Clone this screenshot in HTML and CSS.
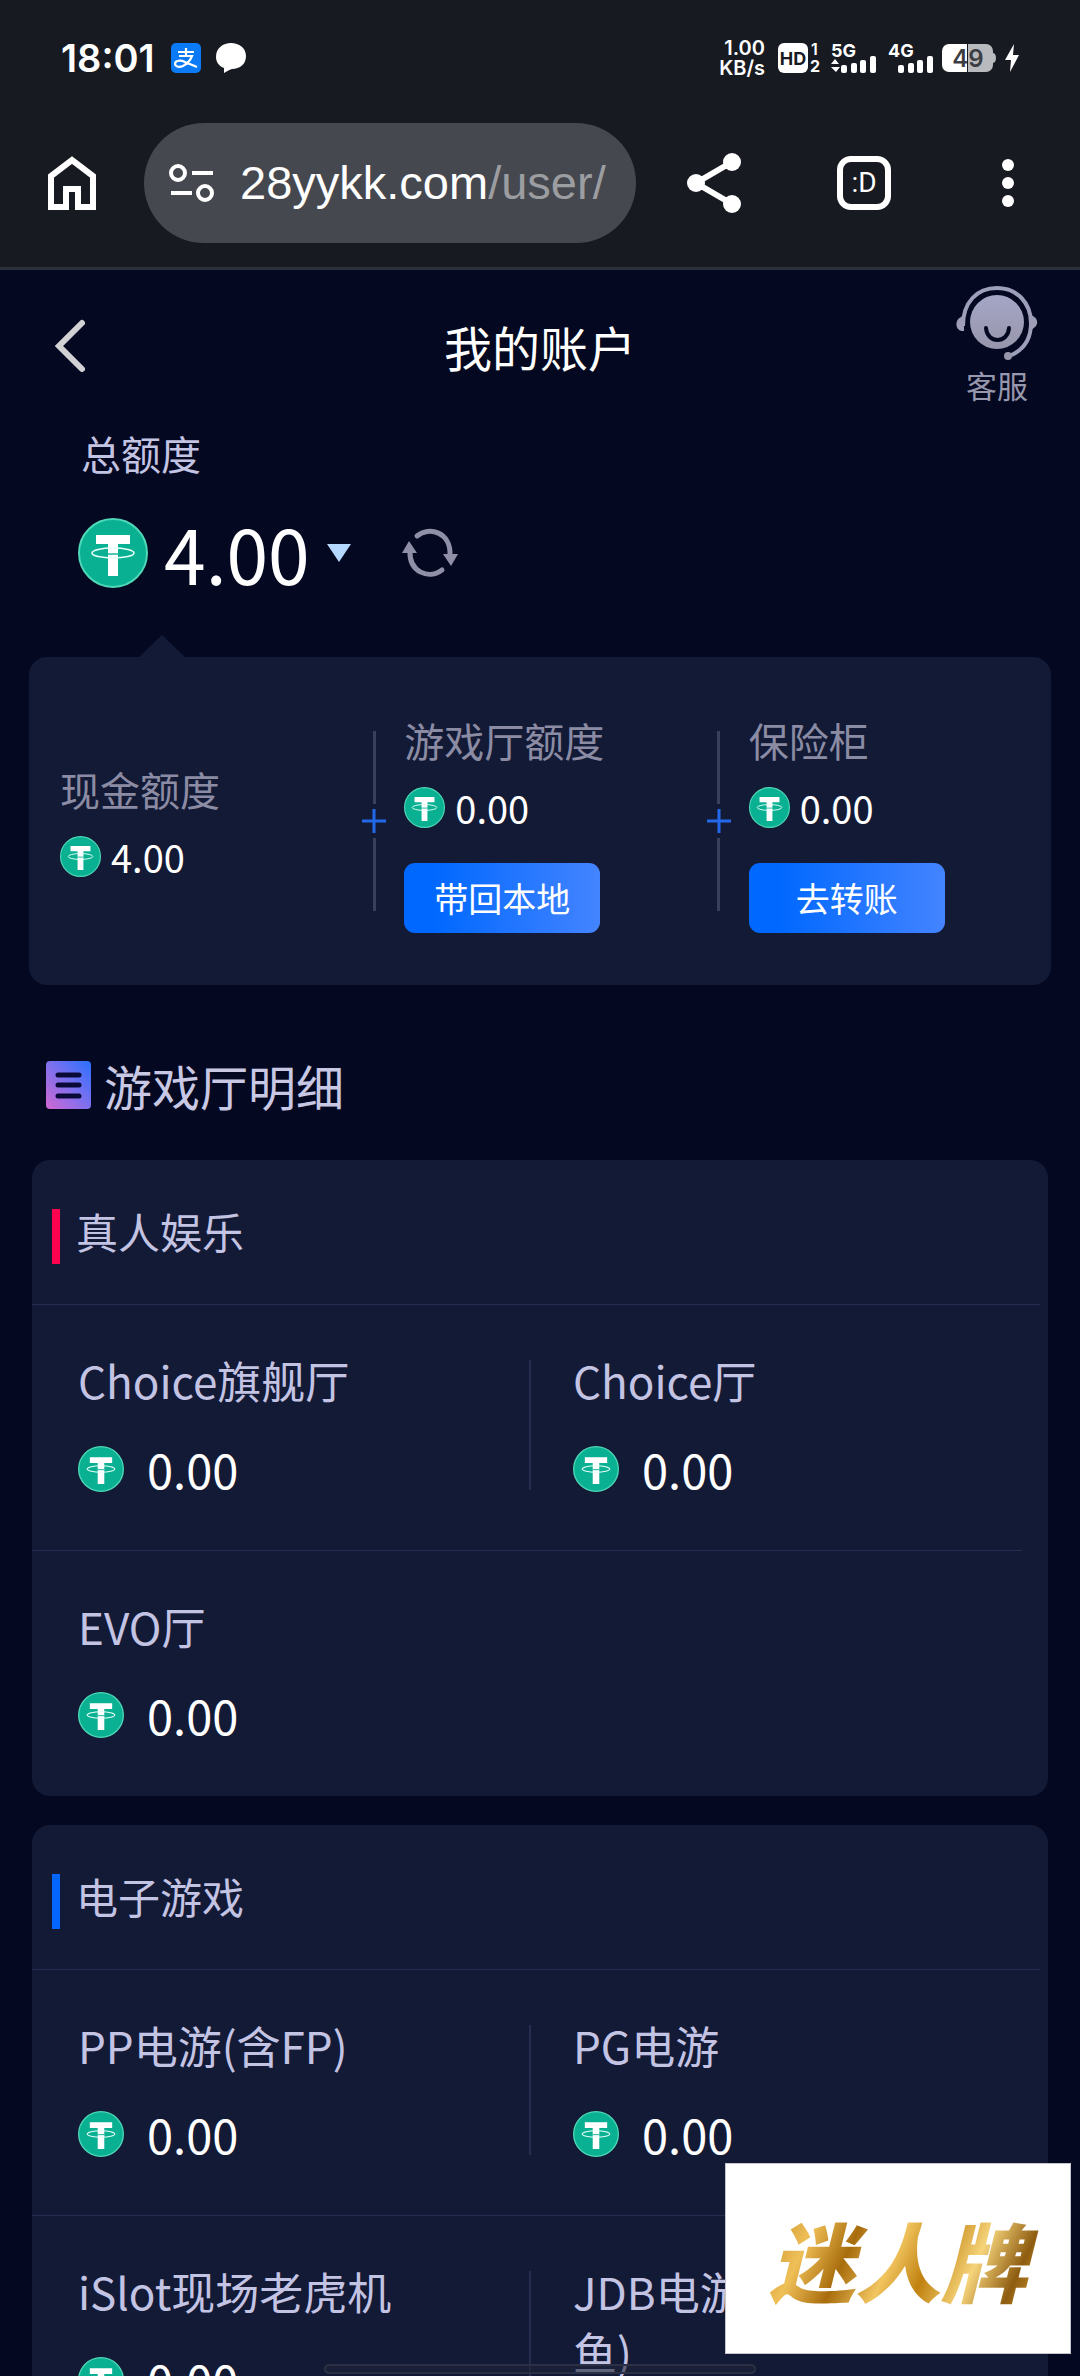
FILE: index.html
```html
<!DOCTYPE html>
<html lang="zh-CN">
<head>
<meta charset="utf-8">
<meta name="viewport" content="width=device-width">
<title>我的账户</title>
<link rel="stylesheet" href="styles.css">
</head>
<body>
<svg class="defs" aria-hidden="true">
  <symbol id="coin" viewBox="0 0 70 70">
    <circle cx="35" cy="35" r="34" fill="#0ab092" stroke="#4fd8b8" stroke-width="2"/>
    <path d="M18 17h34v9H40v32h-10V26H18z" fill="#fff"/>
    <ellipse cx="35" cy="35" rx="21" ry="5" fill="none" stroke="#e6fff8" stroke-width="1.6"/>
    <path d="M30 36h10" stroke="#0ab092" stroke-width="1.4"/>
  </symbol>
</svg>
<div class="phone">
  <div class="status">
    <span class="clock">18:01</span>
    <svg class="alipay" width="30" height="30" viewBox="0 0 30 30"><rect width="30" height="30" rx="5" fill="#0a7bf5"/><path d="M7 9h16M15 5v8M8 13h13c-2 5-5 8-9 10-5 2-8 0-8-2 0-4 6-4 10-2l12 5" fill="none" stroke="#fff" stroke-width="2.2"/></svg>
    <svg class="chat" width="30" height="30" viewBox="0 0 30 30"><path d="M15 0c8 0 15 5 15 13s-6 13-14 13c-3 1-5 2-8 4v-5C3 23 0 19 0 14 0 5 7 0 15 0z" fill="#fff"/></svg>
    <span class="speed"><span>1.00</span><span>KB/s</span></span>
    <svg class="hd" width="42" height="30" viewBox="0 0 42 30"><rect width="30" height="30" rx="6" fill="#fff"/><text x="15" y="22" text-anchor="middle" font-size="18" font-weight="700" fill="#181a22">HD</text><text x="33" y="12" font-size="16" font-weight="600" fill="#fff">1</text><text x="32" y="29" font-size="16" font-weight="700" fill="#fff">2</text></svg>
    <svg class="sig" width="46" height="30" viewBox="0 0 46 30" fill="#fff"><text x="0" y="14" font-size="18" font-weight="700">5G</text><path d="M0 21l4-5 4 5zM0 24h9l-4 5z"/><rect x="10" y="22" width="6" height="8" rx="2"/><rect x="20" y="20" width="6" height="10" rx="2"/><rect x="29" y="17" width="6" height="13" rx="2"/><rect x="39" y="13" width="6" height="17" rx="2"/></svg>
    <svg class="sig" width="46" height="30" viewBox="0 0 46 30" fill="#fff"><text x="0" y="14" font-size="18" font-weight="700">4G</text><rect x="10" y="22" width="6" height="8" rx="2"/><rect x="20" y="20" width="6" height="10" rx="2"/><rect x="29" y="17" width="6" height="13" rx="2"/><rect x="39" y="13" width="6" height="17" rx="2"/></svg>
    <svg class="battery" width="54" height="28" viewBox="0 0 54 28"><path d="M26 0h18a7 7 0 0 1 7 7v14a7 7 0 0 1-7 7H26zM51 9c4 0 4 10 0 10z" fill="#b9babd"/><path d="M7 0h18v28H7a7 7 0 0 1-7-7V7a7 7 0 0 1 7-7z" fill="#fff"/><text x="26" y="23" text-anchor="middle" font-size="24" font-weight="600" fill="#3c3e44">49</text></svg>
    <svg class="bolt" width="14" height="28" viewBox="0 0 14 28"><path d="M9 0L0 16h6L5 28l9-17H8z" fill="#fff"/></svg>
  </div>
  <div class="toolbar">
    <button class="home" aria-label="主页"><svg width="48" height="54" viewBox="0 0 48 54"><path d="M3 51V20L24 4l21 16v31H30V33H18v18z" fill="none" stroke="#fff" stroke-width="6"/></svg></button>
    <button class="url">
      <svg width="46" height="38" viewBox="0 0 46 38" fill="none" stroke="#fff" stroke-width="4"><circle cx="9" cy="9" r="7"/><path d="M23 9h21M2 29h21"/><circle cx="36" cy="29" r="7"/></svg>
      <span>28yykk.com<span class="path">/user/</span></span>
    </button>
    <button class="share" aria-label="分享"><svg width="54" height="60" viewBox="0 0 54 60"><path d="M45 9L9 30l36 21" fill="none" stroke="#fff" stroke-width="6"/><g fill="#fff"><circle cx="45" cy="9" r="9"/><circle cx="9" cy="30" r="9"/><circle cx="45" cy="51" r="9"/></g></svg></button>
    <button class="tabs">:D</button>
    <button class="more" aria-label="更多"><svg width="12" height="48" viewBox="0 0 12 48" fill="#fff"><circle cx="6" cy="6" r="6"/><circle cx="6" cy="24" r="6"/><circle cx="6" cy="42" r="6"/></svg></button>
  </div>

  <main class="page">
    <header class="head">
      <a class="back" href="#" aria-label="返回"><svg width="30" height="52" viewBox="0 0 30 52"><path d="M27 3L4 26l23 23" fill="none" stroke="#d2d2d4" stroke-width="6" stroke-linecap="round"/></svg></a>
      <h1>我的账户</h1>
      <a class="service" href="#">
        <svg width="80" height="74" viewBox="0 0 80 74">
          <defs><linearGradient id="face" x1="0" y1="0" x2="0" y2="1"><stop offset="0" stop-color="#a5a6c6"/><stop offset="1" stop-color="#9796ab"/></linearGradient></defs>
          <path d="M6 40C6 16 20 2 40 2s34 15 34 35c0 18-9 28-22 33" fill="none" stroke="#9e9fbb" stroke-width="4"/>
          <path d="M7 29v16c-9 1-10-11-3-14zM73 29v16l5-4c4-4 2-9-2-11z" fill="#9e9eb6"/>
          <circle cx="51" cy="70" r="4" fill="#9796ab"/>
          <circle cx="40" cy="36" r="27" fill="url(#face)"/>
          <path d="M29 42c1 16 22 16 23 0" fill="none" stroke="#040820" stroke-width="4" stroke-linecap="round"/>
        </svg>
        <span>客服</span>
      </a>
    </header>

    <section class="total">
      <p>总额度</p>
      <div class="sum">
        <svg class="coin-l"><use href="#coin"/></svg>
        <span class="big">4.00</span>
        <svg class="tri" width="24" height="18" viewBox="0 0 24 18"><path d="M0 0h24L12 18z" fill="#b4d8ff"/></svg>
        <button class="refresh" aria-label="刷新"><svg width="56" height="48" viewBox="0 0 56 48"><g fill="none" stroke="#8f8fa8" stroke-width="5" stroke-linecap="round"><path d="M15 7C27-3 49 3 48 26"/><path d="M40 41C27 51 7 43 8 22"/></g><path d="M41 25h15l-7 12zM0 24h15L7 12z" fill="#8f8fa8"/></svg></button>
      </div>
    </section>

    <section class="split">
      <div class="part cash">
        <p>现金额度</p>
        <div class="amt"><svg class="coin-s"><use href="#coin"/></svg>4.00</div>
      </div>
      <div class="plus"><i></i><svg width="24" height="24" viewBox="0 0 24 24"><path d="M12 0v24M0 12h24" stroke="#2468ea" stroke-width="3"/></svg><i></i></div>
      <div class="part">
        <p>游戏厅额度</p>
        <div class="amt"><svg class="coin-s"><use href="#coin"/></svg>0.00</div>
        <button class="cta">带回本地</button>
      </div>
      <div class="plus"><i></i><svg width="24" height="24" viewBox="0 0 24 24"><path d="M12 0v24M0 12h24" stroke="#2468ea" stroke-width="3"/></svg><i></i></div>
      <div class="part">
        <p>保险柜</p>
        <div class="amt"><svg class="coin-s"><use href="#coin"/></svg>0.00</div>
        <button class="cta">去转账</button>
      </div>
    </section>

    <h2 class="title">
      <svg width="45" height="48" viewBox="0 0 45 48"><defs><linearGradient id="doc" x1="0" y1="1" x2="1" y2="0"><stop offset="0" stop-color="#d268d2"/><stop offset=".5" stop-color="#7e70ee"/><stop offset="1" stop-color="#2a70ff"/></linearGradient></defs><rect width="45" height="48" rx="4" fill="url(#doc)"/><path d="M12 14h21M12 24h21M12 35h21" stroke="#0a0a38" stroke-width="5" stroke-linecap="round"/></svg>
      游戏厅明细
    </h2>

    <section class="card">
      <h3><i class="mark red"></i>真人娱乐</h3>
      <ul>
        <li><p>Choice旗舰厅</p><div class="val"><svg class="coin-m"><use href="#coin"/></svg>0.00</div></li>
        <li><p>Choice厅</p><div class="val"><svg class="coin-m"><use href="#coin"/></svg>0.00</div></li>
        <li><p>EVO厅</p><div class="val"><svg class="coin-m"><use href="#coin"/></svg>0.00</div></li>
      </ul>
    </section>

    <section class="card">
      <h3><i class="mark blue"></i>电子游戏</h3>
      <ul>
        <li><p>PP电游(含FP)</p><div class="val"><svg class="coin-m"><use href="#coin"/></svg>0.00</div></li>
        <li><p>PG电游</p><div class="val"><svg class="coin-m"><use href="#coin"/></svg>0.00</div></li>
        <li><p>iSlot现场老虎机</p><div class="val"><svg class="coin-m"><use href="#coin"/></svg>0.00</div></li>
        <li><p>JDB电游<br>鱼)</p><div class="val"><svg class="coin-m"><use href="#coin"/></svg>0.00</div></li>
      </ul>
    </section>
  </main>
  <div class="gesture"></div>
  <div class="stamp"><span>迷人牌</span></div>
</div>
</body>
</html>
```
FILE: styles.css
```css
* { box-sizing: border-box; margin: 0; padding: 0; }
body { background: #040820; color: #fff; font-family: "Noto Sans CJK SC", sans-serif; }
button { border: 0; background: none; color: inherit; font: inherit; display: flex; align-items: center; }
a { color: inherit; text-decoration: none; }
svg { display: block; flex: none; overflow: visible; }
h1, h2, h3 { font-weight: 400; }
ul { list-style: none; }
.defs { position: absolute; width: 0; height: 0; }

.phone { position: relative; display: flex; flex-direction: column; height: 100vh; overflow: hidden; }

/* system bar */
.status { display: flex; align-items: center; flex: none; height: 116px; padding: 0 61px; background: #181a22; font-family: Inter, sans-serif; }
.clock { font-size: 38px; font-weight: 600; line-height: 48px; }
.alipay { margin-left: 16px; }
.chat { margin-left: 15px; }
.speed { display: flex; flex-direction: column; margin-left: auto; font-size: 20px; font-weight: 600; line-height: 20px; text-align: right; }
.hd { margin-left: 13px; }
.sig { margin-left: 11px; }
.battery { margin-left: 8px; }
.bolt { margin-left: 9px; }

/* browser bar */
.toolbar { display: flex; align-items: center; flex: none; padding: 7px 66px 24px 48px; background: #181a22; border-bottom: 3px solid #2d2f3a; font-family: Roboto, sans-serif; }
.url { flex: 1; height: 120px; margin-left: 48px; padding-left: 25px; gap: 25px; border-radius: 60px; background: #46484f; font-family: "Liberation Sans", sans-serif; font-size: 47px; line-height: 60px; white-space: nowrap; overflow: hidden; }
.path { color: #9c9da1; }
.share { margin-left: 51px; }
.tabs { justify-content: center; width: 54px; height: 54px; margin-left: 96px; border: 6px solid #fff; border-radius: 14px; font-size: 28px; line-height: 30px; }
.more { margin-left: 111px; }

/* page header */
.page { flex: 1; min-height: 0; overflow: hidden; padding-top: 16px; }
.head { display: grid; grid-template-columns: 1fr auto 1fr; align-items: center; padding: 0 43px; }
.back { padding-left: 12px; }
.head h1 { font-size: 48px; line-height: 60px; }
.service { justify-self: end; text-align: center; color: #9797ad; font-size: 31px; }
.service span { display: block; margin-top: 5px; line-height: 40px; }

/* total balance */
.total { padding: 18px 78px 69px; }
.total p { padding-left: 3px; font-size: 40px; line-height: 60px; color: #c3c3e3; }
.sum { display: flex; align-items: center; height: 70px; margin-top: 35px; }
.coin-l { width: 70px; height: 70px; }
.big { margin-left: 16px; font-size: 75px; line-height: 70px; }
.tri { margin-left: 17px; }
.refresh { margin-left: 51px; }

.split { position: relative; display: flex; align-items: center; min-height: 328px; margin: 0 29px; padding-left: 31px; border-radius: 18px; background: #131a36; }
.split::before { content: ""; position: absolute; top: -22px; left: 110px; border: 23px solid transparent; border-top: 0; border-bottom: 22px solid #131a36; }
.part { flex: 1; min-width: 0; }
.cash { padding-bottom: 6px; }
.part p { font-size: 40px; line-height: 60px; color: #8b8ca4; white-space: nowrap; }
.amt { display: flex; align-items: center; gap: 10px; margin-top: 17px; font-size: 38px; line-height: 41px; }
.coin-s { width: 41px; height: 41px; }
.cta { justify-content: center; width: 196px; height: 70px; margin-top: 35px; border-radius: 11px; background: linear-gradient(90deg, #0068ff 15%, #4484ff); font-size: 34px; line-height: 44px; }
.plus { display: flex; flex-direction: column; align-items: center; gap: 5px; margin-right: 18px; }
.plus i { width: 3px; height: 73px; background: #3a3f5c; }

.title { display: flex; align-items: center; gap: 13px; margin: 70px 46px 45px; font-size: 48px; line-height: 60px; color: #c8c8e4; }

/* game halls */
.card { margin: 0 32px 29px; border-radius: 18px; background: #131a36; color: #c3c3e3; }
.card h3 { display: flex; gap: 16px; margin-right: 8px; padding: 49px 20px 40px; border-bottom: 1px solid #262d50; font-size: 42px; line-height: 44px; }
.mark { width: 8px; height: 55px; }
.red { background: #fd024e; }
.blue { background: #0566ff; }
.card ul { display: grid; grid-template-columns: 1fr 1fr; margin-right: 26px; }
.card li { padding: 45px 0 51px 46px; }
.card li:nth-child(-n+2) { border-bottom: 1px solid #262d50; }
.card li:nth-child(even) { background: linear-gradient(#262d50, #262d50) no-repeat 2px 55px / 2px calc(100% - 115px); }
.card li p { font-size: 44px; line-height: 60px; }
.val { display: flex; align-items: center; gap: 23px; margin-top: 29px; font-size: 47px; line-height: 60px; color: #fff; }
.coin-m { width: 46px; height: 46px; }

/* overlays */
.gesture { position: absolute; bottom: 2px; left: 30%; right: 30%; height: 10px; border: 2px solid #2b3045; border-radius: 5px; background: rgba(32, 36, 56, .6); }
.stamp { position: absolute; right: 9px; bottom: 22px; display: flex; align-items: center; justify-content: center; width: 346px; height: 191px; border: 1px solid #c4c4cc; background: #fff; font-size: 86px; font-weight: 900; font-style: italic; line-height: 110px; }
.stamp span { padding: 0 12px; background: linear-gradient(115deg, #b47a14, #f0c058 20%, #a86c0c 34%, #f2c560 48%, #c0810f 60%, #f6d47a 74%, #8e5c10 88%, #dba434); -webkit-background-clip: text; background-clip: text; color: transparent; }
```
